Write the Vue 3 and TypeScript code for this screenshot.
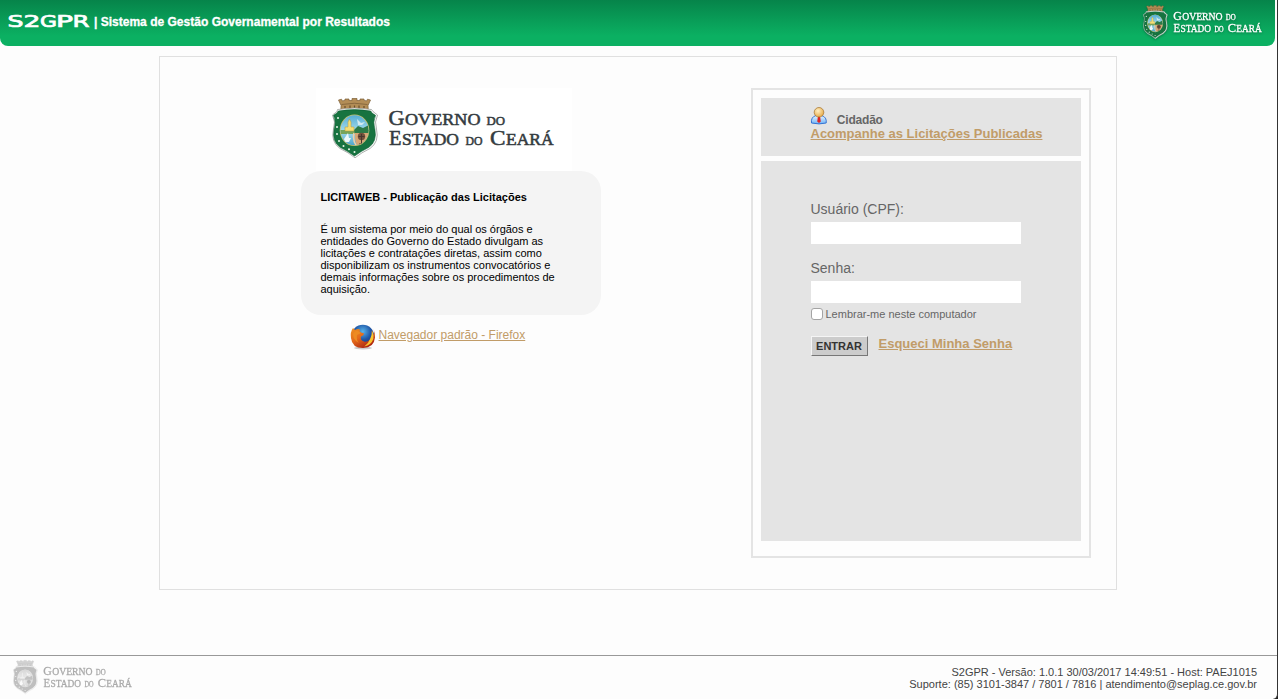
<script setup lang="ts">
import { ref } from 'vue'

interface Glyph {
  char: string
  x: number
  width: number
}

const user = ref<string>('')
const password = ref<string>('')
const remember = ref<boolean>(false)

const wordmark: Glyph[] = [
  { char: 'S', x: -0.5, width: 16 },
  { char: '2', x: 15.5, width: 17 },
  { char: 'G', x: 32, width: 17 },
  { char: 'P', x: 48, width: 17 },
  { char: 'R', x: 64.5, width: 17 },
]

const about: string[] = [
  'É um sistema por meio do qual os órgãos e',
  'entidades do Governo do Estado divulgam as',
  'licitações e contratações diretas, assim como',
  'disponibilizam os instrumentos convocatórios e',
  'demais informações sobre os procedimentos de',
  'aquisição.',
]
</script>

<template>
  <div class="page">
    <svg class="defs" width="0" height="0" aria-hidden="true">
      <defs>
        <linearGradient id="sky" x1="0" y1="0" x2="0" y2="1">
          <stop offset="0" stop-color="#4fa9d3" />
          <stop offset="0.5" stop-color="#a4dcec" />
          <stop offset="1" stop-color="#3f9cc6" />
        </linearGradient>
        <linearGradient id="body" x1="0" y1="0" x2="0" y2="1">
          <stop offset="0" stop-color="#e8f5ff" />
          <stop offset="1" stop-color="#6fb2f5" />
        </linearGradient>
        <radialGradient id="head" cx="0.4" cy="0.35" r="0.7">
          <stop offset="0" stop-color="#fff0c4" />
          <stop offset="1" stop-color="#e5a642" />
        </radialGradient>
        <radialGradient id="globe" cx="0.5" cy="0.3" r="0.7">
          <stop offset="0" stop-color="#58b4ea" />
          <stop offset="0.5" stop-color="#2058a8" />
          <stop offset="1" stop-color="#142264" />
        </radialGradient>
        <linearGradient id="fox" x1="0" y1="0" x2="0.7" y2="1">
          <stop offset="0" stop-color="#ee9322" />
          <stop offset="0.5" stop-color="#e3681a" />
          <stop offset="1" stop-color="#a82010" />
        </linearGradient>
        <clipPath id="oval"><ellipse cx="24.5" cy="34.3" rx="14" ry="15" /></clipPath>

        <symbol id="ceara" viewBox="0 0 226 64" preserveAspectRatio="none">
          <path d="M8.500 4l3-.8 1 1.800 2.500-.8v-1.200h4v1.500h3v-2h5v2h3v-1.500h4v1.200l2.500.8 1-1.800 3 .8-2.500 5.500.3 4.500q-13.500-2.500-27.500 0l.3-4.500z" fill="#b38d56" stroke="#7c6038" stroke-width=".7" />
          <path d="M11.500 8.500q13-2.500 26 0" fill="none" stroke="#7c6038" stroke-width=".8" />
          <path d="M15 10v2.500M20 9.500v2.500M24.500 9.500v2.500M29 9.500v2.500M34 10v2.500" stroke="#6a4d29" stroke-width="1.200" />
          <path d="M7.500 13.500q17-3 34 0l1.500 2 4.500 3.500q-3.500 7-1 14 3 13-6.500 19.500-8.500 4-15 9.300-6.500-5.300-15-9.300-9.500-6.500-6.500-19.500 2.500-7-1-14l4.500-3.500z" fill="#fff" stroke="#9b9e9a" stroke-width=".8" />
          <path d="M8.300 15q16.200-2.800 32.400 0 1 2.700 4.800 4.300-3 7-.6 14 2.300 12.200-6 18-8 4-14.400 8.700-6.400-4.700-14.400-8.700-8.300-5.800-6-18 2.400-7-.6-14 3.800-1.600 4.800-4.300z" fill="#177340" stroke="#0b5f33" stroke-width=".6" />
          <ellipse cx="24.500" cy="34.300" rx="14.800" ry="15.800" fill="#c9c06a" />
          <g clip-path="url(#oval)">
            <rect x="9" y="18" width="31" height="34" fill="url(#sky)" />
            <path d="M9 34h31v4H9z" fill="#76a45c" />
            <path d="M24 34l4-4 5 2 6-3v9H25z" fill="#2c7a47" />
            <path d="M15 35v-4h3v-5l1.500-3 1.500 3v5h3v4z" fill="#f6de75" stroke="#b59b38" stroke-width=".5" />
            <path d="M25 37h16v17H29q-5-9-4-17z" fill="#d8a675" />
            <path d="M24 37q-2 8 4 15" fill="none" stroke="#efcfaa" stroke-width="1.500" />
            <path d="M14 43l4-6 1 5h2l-2 4h-4z" fill="#eef8fa" />
            <circle cx="31.500" cy="40.500" r="3.700" fill="#73513b" />
            <path d="M31.500 38v11M28.500 40.500h6M29 48h5" stroke="#46372d" stroke-width="1" />
            <path d="M27 23l4 4 4-1-3 3h-4z" fill="#d3eaf0" />
          </g>
          <g fill="#e9f6e8">
            <circle cx="7" cy="31" r="1" /><circle cx="7" cy="38" r="1" />
            <circle cx="9" cy="45" r="1" /><circle cx="13.500" cy="50" r="1" />
            <circle cx="19" cy="53.300" r="1" /><circle cx="24.500" cy="56" r="1" />
            <circle cx="8" cy="22" r="1" />
          </g>
          <g font-family="'Liberation Serif', serif" fill="currentColor" stroke="currentColor" stroke-width=".55">
            <text x="58.500" y="29.300" font-size="22" textLength="16" lengthAdjust="spacingAndGlyphs">G</text>
            <text x="75" y="29.300" font-size="17.500" textLength="75.500" lengthAdjust="spacingAndGlyphs">OVERNO</text>
            <text x="156.500" y="29.300" font-size="13" textLength="18.500" lengthAdjust="spacingAndGlyphs">DO</text>
            <text x="59" y="49.400" font-size="22" textLength="12.500" lengthAdjust="spacingAndGlyphs">E</text>
            <text x="72" y="49.400" font-size="17.500" textLength="57" lengthAdjust="spacingAndGlyphs">STADO</text>
            <text x="135.500" y="49.400" font-size="13" textLength="17" lengthAdjust="spacingAndGlyphs">DO</text>
            <text x="160" y="49.400" font-size="22" textLength="15.500" lengthAdjust="spacingAndGlyphs">C</text>
            <text x="176" y="49.400" font-size="17.500" textLength="47.500" lengthAdjust="spacingAndGlyphs">EARÁ</text>
          </g>
        </symbol>
      </defs>
    </svg>

    <header class="top">
      <svg class="wordmark" width="82" height="16" viewBox="0 0 82 16">
        <text v-for="g in wordmark" :key="g.char" :x="g.x" y="13" :textLength="g.width" lengthAdjust="spacingAndGlyphs">{{ g.char }}</text>
      </svg>
      <svg class="system" width="300" height="20">
        <text x="0" y="14" textLength="296" lengthAdjust="spacing">| Sistema de Gestão Governamental por Resultados</text>
      </svg>
      <svg class="seal-top" width="121" height="36"><use href="#ceara" width="121" height="36" /></svg>
    </header>

    <main class="frame">
      <section class="intro">
        <div class="brand"><svg width="226" height="64"><use href="#ceara" width="226" height="64" /></svg></div>
        <div class="about">
          <h1>LICITAWEB - Publicação das Licitações</h1>
          <p><span v-for="line in about" :key="line">{{ line }}</span></p>
        </div>
        <div class="browser">
          <svg width="26" height="26" viewBox="0 0 26 26">
            <ellipse cx="13" cy="24" rx="9" ry="1.500" fill="#999" opacity=".5" />
            <circle cx="12.800" cy="12" r="11.300" fill="url(#globe)" />
            <path d="M3 4l2 2q3-1.500 5-.5-1 2 1 3l3 1q0 2-3 3-1 4 3 5 3 1 6-2 3-4 1.500-9 2 2 2 5 1.500-3 0-7 1.500 4 1.500 9-1 10.500-12 10.500Q2 24 1 14 0 8 3 4z" fill="url(#fox)" />
            <path d="M22 6.500q2.300 4.500 1.300 8.500-2 6-9 7.500 4.500-3.500 6-8 1.700-4 1.700-8z" fill="#f8c52f" />
            <path d="M3 10q2-4 5-3l3 2-4 2q-1 5 2 8-6-3-6-9z" fill="#ed8b22" />
          </svg>
          <a href="#">Navegador padrão - Firefox</a>
        </div>
      </section>

      <aside class="panel">
        <div class="citizen">
          <div class="who">
            <svg width="18" height="18" viewBox="0 0 18 18">
              <path d="M1.500 16q-.8-6 4.500-7.500h5.500Q17 10 16.200 16q-7 1.800-14.700 0z" fill="url(#body)" stroke="#3574d4" />
              <path d="M6 8.500l3 3.500 3-3.500" fill="#fff" />
              <path d="M8 9h2l.8 5.500L9 16l-1.800-1.500z" fill="#e02222" />
              <circle cx="9" cy="5.300" r="4.800" fill="url(#head)" stroke="#a4712d" stroke-width=".7" />
            </svg>
            <strong>Cidadão</strong>
          </div>
          <a href="#">Acompanhe as Licitações Publicadas</a>
        </div>
        <form class="login" @submit.prevent>
          <label class="caption" for="user">Usuário (CPF):</label>
          <input id="user" v-model="user" class="field" type="text" />
          <label class="caption second" for="password">Senha:</label>
          <input id="password" v-model="password" class="field" type="password" />
          <label class="remember"><input v-model="remember" type="checkbox" /><span>Lembrar-me neste computador</span></label>
          <div class="actions">
            <button type="submit">ENTRAR</button>
            <a href="#">Esqueci Minha Senha</a>
          </div>
        </form>
      </aside>
    </main>

    <footer class="bottom">
      <svg class="seal-bottom" width="121" height="36"><use href="#ceara" width="121" height="36" /></svg>
      <div class="support">
        <div class="version">S2GPR - Versão: 1.0.1 30/03/2017 14:49:51 - Host: PAEJ1015</div>
        <div class="contact">Suporte: (85) 3101-3847 / 7801 / 7816 | atendimento@seplag.ce.gov.br</div>
      </div>
    </footer>
  </div>
</template>

<style>
body {
  margin: 0;
  overflow: hidden;
  background: #222;
}
</style>

<style scoped>
.page {
  box-sizing: border-box;
  width: 1278px;
  height: 699px;
  display: flex;
  flex-direction: column;
  background: #fdfdfd;
  border-right: 1px solid #333;
  border-bottom-right-radius: 5px;
  font-family: 'Liberation Sans', Arial, sans-serif;
  color: #666;
}
.page * {
  box-sizing: border-box;
}
svg {
  display: block;
  flex: none;
}
.defs {
  position: absolute;
}
a {
  color: #c19c68;
  white-space: nowrap;
}
.top {
  width: 1275px;
  height: 46px;
  flex: none;
  display: flex;
  padding-left: 8px;
  border-radius: 0 0 8px 8px;
  background: linear-gradient(#06844a 0, #0bb062 36px, #0bb062 100%);
}
.wordmark {
  margin-top: 14px;
  overflow: visible;
}
.wordmark text {
  font: 16.500px 'DejaVu Sans', sans-serif;
  fill: #fff;
  stroke: #fff;
  stroke-width: 0.7;
}
.system {
  margin: 12px 0 0 4px;
}
.system text {
  font: bold 12px 'Liberation Sans', Arial, sans-serif;
  fill: #fff;
  stroke: #fff;
  stroke-width: 0.3;
}
.seal-top {
  margin: 4px 12px 0 auto;
  color: #fff;
  filter: drop-shadow(0 1px 1px #0557308c);
}
.frame {
  width: 958px;
  height: 534px;
  flex: none;
  margin: 10px 0 0 159px;
  border: 1px solid #e0e0e0;
  display: flex;
  justify-content: space-between;
  padding: 31px 25px 0 141px;
}
.intro {
  width: 300px;
}
.brand {
  width: 256px;
  height: 83px;
  margin-left: 15px;
  padding: 8px 0 0 14px;
  background: #fff;
  color: #343b40;
}
.about {
  height: 144px;
  border-radius: 20px;
  background: #f4f4f4;
  padding: 20px 0 0 19.500px;
  color: #000;
  font-size: 11px;
  line-height: 12px;
}
.about h1 {
  margin: 0;
  font-size: 11px;
  line-height: 12px;
}
.about p {
  margin: 20px 0 0;
}
.about span {
  display: block;
  white-space: nowrap;
}
.browser {
  display: flex;
  padding: 9px 0 0 49px;
  font-size: 12px;
  line-height: 22px;
}
.browser a {
  margin-left: 2.500px;
}
.panel {
  width: 340px;
  height: 470px;
  border: 2px solid #e4e4e4;
  padding: 8px;
}
.citizen {
  height: 58px;
  background: #e4e4e4;
  padding: 9px 0 0 49.500px;
  font-size: 13px;
  font-weight: bold;
  line-height: 15px;
}
.who {
  height: 19px;
  display: flex;
  margin-left: -0.5px;
}
.who strong {
  margin: 6px 0 0 8.800px;
  font-size: 12px;
  letter-spacing: -0.2px;
}
.citizen a {
  display: block;
}
.login {
  height: 380px;
  margin-top: 5px;
  padding: 39px 0 0 49.500px;
  background: #e4e4e4;
}
.caption {
  display: block;
  height: 22px;
  font-size: 14px;
  line-height: 18px;
}
.field {
  display: block;
  width: 210px;
  height: 22px;
  border: 0;
  padding: 2px;
  background: #fff;
}
.second {
  margin-top: 15px;
}
.remember {
  display: flex;
  height: 12px;
  margin-top: 5px;
  font-size: 11px;
  line-height: 12px;
}
.remember input {
  appearance: none;
  width: 12px;
  height: 12px;
  margin: 0 3px 0 0;
  border: 1px solid #a4a4a4;
  border-radius: 3px;
  background: #fff;
}
.actions {
  display: flex;
  margin-top: 16px;
}
.actions button {
  width: 57px;
  height: 20px;
  padding: 0;
  border: 1px solid;
  border-color: #f5f5f5 #777 #777 #f5f5f5;
  background: #ccc;
  color: #333;
  font: bold 11px 'Liberation Sans', Arial, sans-serif;
}
.actions a {
  margin-left: 11px;
  font-size: 13px;
  font-weight: bold;
  line-height: 15px;
}
.bottom {
  height: 44px;
  flex: none;
  display: flex;
  justify-content: space-between;
  margin-top: auto;
  padding: 3px 20px 0 12px;
  border-top: 1px solid #999;
}
.seal-bottom {
  color: #222;
  filter: grayscale(1);
  opacity: 0.38;
}
.support {
  padding-top: 7px;
  font-size: 11px;
  line-height: 12px;
  color: #444;
  text-align: right;
}
</style>
